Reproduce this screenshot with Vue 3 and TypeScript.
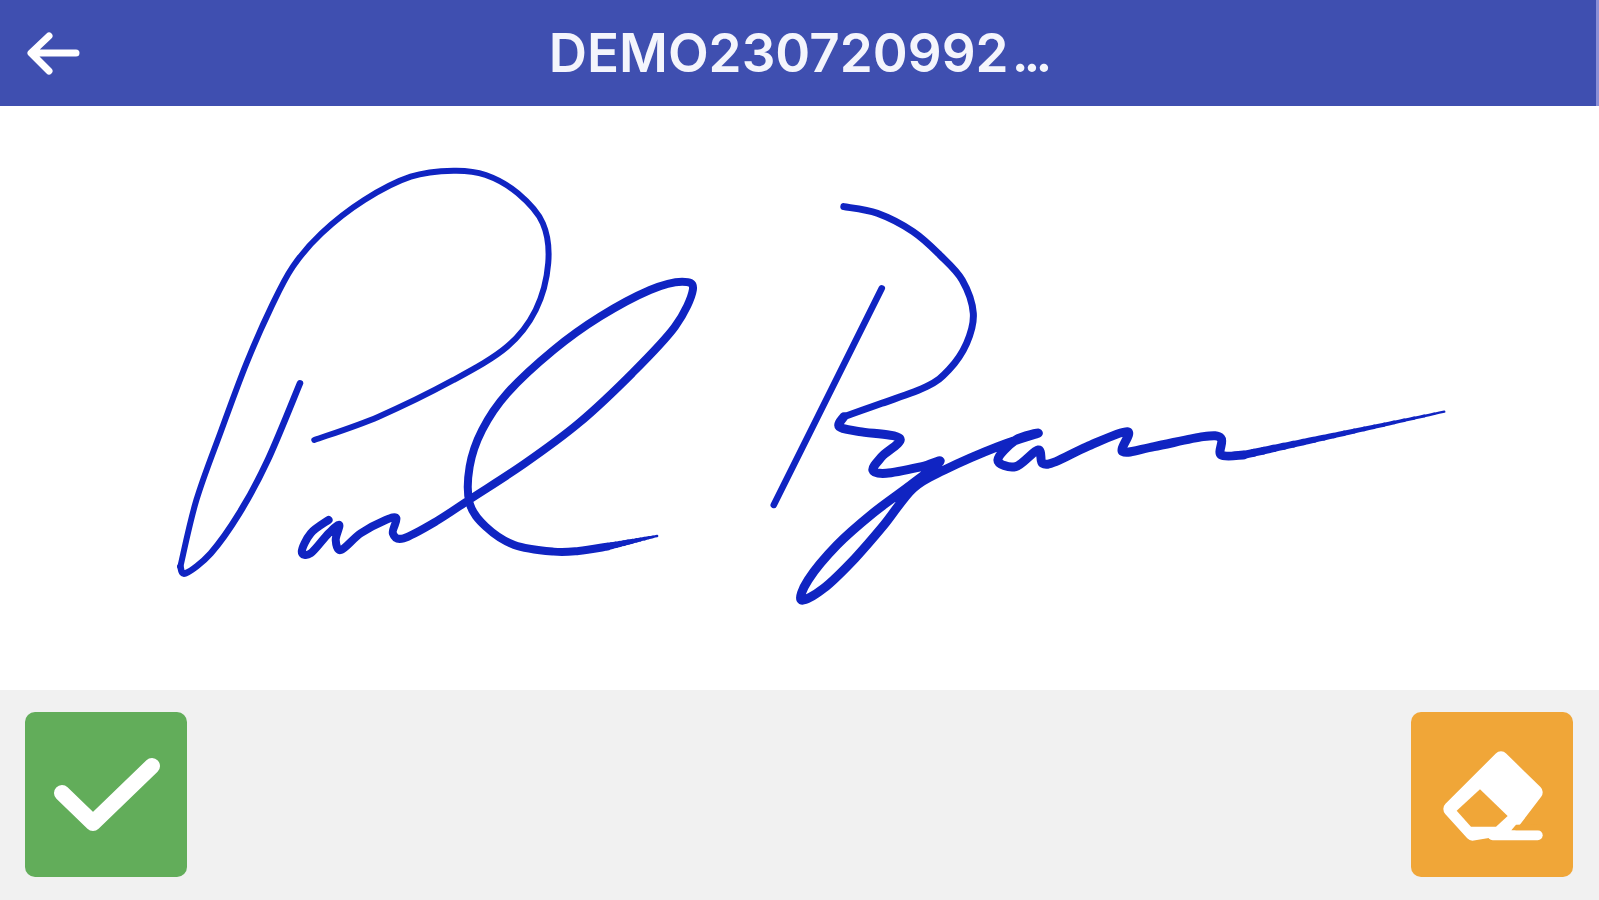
<script setup lang="ts">
type Pt = [number, number]
type Stroke = { pts: Pt[]; w: number }

function smooth(pts: Pt[]): string {
  let d = `M${pts[0][0]} ${pts[0][1]}`
  for (let i = 0; i < pts.length - 1; i++) {
    const p0 = pts[Math.max(i - 1, 0)]
    const p1 = pts[i]
    const p2 = pts[i + 1]
    const p3 = pts[Math.min(i + 2, pts.length - 1)]
    const c1x = p1[0] + (p2[0] - p0[0]) / 6
    const c1y = p1[1] + (p2[1] - p0[1]) / 6
    const c2x = p2[0] - (p3[0] - p1[0]) / 6
    const c2y = p2[1] - (p3[1] - p1[1]) / 6
    d += `C${c1x.toFixed(1)} ${c1y.toFixed(1)} ${c2x.toFixed(1)} ${c2y.toFixed(1)} ${p2[0]} ${p2[1]}`
  }
  return d
}

// A straight run whose width eases from w0 to w1, as the pen lifts off
function taper(a: Pt, b: Pt, w0: number, w1: number, n = 12): Stroke[] {
  const out: Stroke[] = []
  for (let i = 0; i < n; i++) {
    const s = i / n
    const e = (i + 1) / n
    out.push({
      w: w0 + (w1 - w0) * s,
      pts: [
        [a[0] + (b[0] - a[0]) * s, a[1] + (b[1] - a[1]) * s],
        [a[0] + (b[0] - a[0]) * e, a[1] + (b[1] - a[1]) * e]
      ]
    })
  }
  return out
}

// Coordinates read from the two magnified crops of the signature; widths are screen pixels
const paul: Stroke[] = [
  { w: 6, pts: [[460, 870], [640, 800], [850, 690], [1000, 590], [1080, 480], [1115, 340], [1100, 220], [1030, 130], [940, 75], [850, 62], [730, 80], [600, 150], [480, 250], [400, 350], [340, 470], [270, 640], [200, 840], [130, 1050], [85, 1250]] },
  { w: 6.5, pts: [[85, 1250], [100, 1270], [170, 1210], [250, 1090], [330, 930], [420, 700]] },
  { w: 8, pts: [[500, 1110], [450, 1150], [425, 1205], [450, 1210], [500, 1150], [530, 1125], [520, 1170], [535, 1200], [590, 1150], [660, 1110], [690, 1105], [680, 1150], [710, 1165], [800, 1115], [900, 1045], [1050, 940], [1200, 820], [1350, 670], [1470, 530], [1520, 420], [1490, 395], [1400, 420], [1260, 500], [1130, 600], [1000, 730], [930, 840], [895, 950], [895, 1060], [940, 1130], [1020, 1185], [1130, 1205], [1200, 1203], [1280, 1190]] },
  ...taper([1280, 1190], [1420, 1158], 7, 2)
]
const ryan: Stroke[] = [
  { w: 7, pts: [[255, 80], [330, 100], [410, 155], [470, 225], [520, 300], [545, 400], [530, 490], [490, 570], [440, 620], [340, 670], [255, 710]] },
  { w: 9, pts: [[255, 710], [245, 740], [290, 755], [380, 775], [340, 830], [320, 870], [350, 880], [430, 860], [470, 845], [400, 920], [320, 1000], [240, 1095], [175, 1200], [160, 1260], [210, 1225], [280, 1135], [345, 1035], [410, 925], [480, 870], [600, 800], [690, 760], [640, 780], [600, 840], [640, 860], [690, 810], [700, 850], [730, 845], [800, 800], [890, 755], [880, 815], [950, 800], [1060, 770], [1100, 775], [1100, 825], [1150, 825]] },
  ...taper([1150, 825], [1600, 695], 8, 2, 20),
  { w: 6.5, pts: [[340, 325], [98, 975]] }
]
const paulPaths = paul.map((s) => ({ d: smooth(s.pts), w: s.w }))
const ryanPaths = ryan.map((s) => ({ d: smooth(s.pts), w: s.w }))
</script>

<template>
  <div class="page">
    <header class="bar">
      <button class="back" aria-label="Back">
        <svg width="56" height="50" viewBox="0 0 56 50">
          <path d="M49 25H5M22 8 4 25l18 18" fill="none" stroke="#fff" stroke-width="7" stroke-linecap="round" stroke-linejoin="round" />
        </svg>
      </button>
      <h1 class="title">DEMO230720992<span class="dots">...</span></h1>
    </header>
    <main class="canvas">
      <svg class="sign" viewBox="0 106 1599 584" width="1599" height="584">
        <g transform="translate(150 150) scale(.35714 .3333)" fill="none" stroke="#1024c2" stroke-linecap="round" stroke-linejoin="round">
          <path v-for="(p, i) in paulPaths" :key="i" :d="p.d" :stroke-width="p.w" vector-effect="non-scaling-stroke" />
        </g>
        <g transform="translate(730 180) scale(.44643 .3333)" fill="none" stroke="#1024c2" stroke-linecap="round" stroke-linejoin="round">
          <path v-for="(p, i) in ryanPaths" :key="i" :d="p.d" :stroke-width="p.w" vector-effect="non-scaling-stroke" />
        </g>
      </svg>
    </main>
    <footer class="actions">
      <button class="action ok" aria-label="Confirm">
        <svg width="112" height="84" viewBox="-4 -4 112 84">
          <path d="M8 36 39 66 98 9" fill="none" stroke="#fff" stroke-width="16" stroke-linecap="round" stroke-linejoin="round" />
        </svg>
      </button>
      <button class="action clear" aria-label="Clear">
        <svg width="102" height="92" viewBox="245 205 306 276">
          <path d="M425 234 528 335 448 440 340 458 274 385Z" fill="#fff" stroke="#fff" stroke-width="44" stroke-linejoin="round" />
          <path d="M400 464H535" fill="none" stroke="#fff" stroke-width="30" stroke-linecap="round" />
          <path class="hole" d="M362 326 445 406 410 438H335L292 390Z" />
          <path class="hole" d="M470 432 551 430V449H456Z" />
        </svg>
      </button>
    </footer>
  </div>
</template>

<style scoped>
.page {
  display: flex;
  flex-direction: column;
  width: 1599px;
  height: 900px;
  overflow: hidden;
  background: #fff;
  font-family: Inter, Roboto, "Liberation Sans", sans-serif;
}
.bar {
  position: relative;
  display: flex;
  align-items: center;
  justify-content: center;
  flex: 0 0 106px;
  box-sizing: border-box;
  border-right: 3px solid #8a90d8;
  background: #3f4fb0;
}
.back {
  position: absolute;
  left: 27px;
  top: 28px;
  display: flex;
  padding: 0;
  border: 0;
  background: none;
}
.title {
  margin: 0;
  color: #f4f5fc;
  font-size: 53px;
  font-weight: 600;
  line-height: 1;
}
.dots {
  margin-left: 3px;
  letter-spacing: -5px;
}
.canvas {
  flex: 1;
  min-height: 0;
}
.sign {
  display: block;
  filter: blur(0.6px);
}
.actions {
  display: flex;
  justify-content: space-between;
  flex: 0 0 210px;
  padding: 22px 26px 23px 25px;
  box-sizing: border-box;
  background: #f1f1f1;
}
.action {
  display: flex;
  align-items: center;
  justify-content: center;
  width: 162px;
  height: 165px;
  padding: 0;
  border: 0;
  border-radius: 10px;
}
.ok {
  background: #62ad5a;
}
.clear {
  background: #f0a638;
}
.hole {
  fill: #f0a638;
}
</style>
